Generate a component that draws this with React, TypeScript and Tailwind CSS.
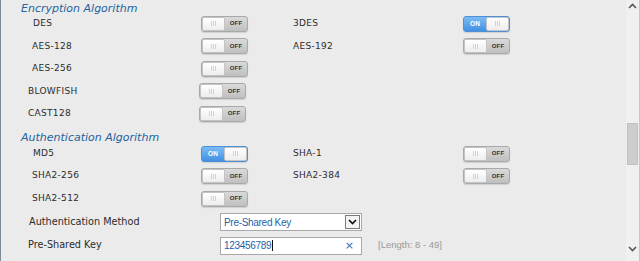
import React from "react";

function Knob() {
  return (
    <div className="w-[23px] h-full rounded-[2px] border border-[#c4c4c4] bg-gradient-to-b from-[#ffffff] to-[#ededed] flex items-center justify-center gap-[1px]">
      <div className="w-[1px] h-[5px] bg-[#d2d2d2]" />
      <div className="w-[1px] h-[5px] bg-[#d2d2d2]" />
      <div className="w-[1px] h-[5px] bg-[#d2d2d2]" />
    </div>
  );
}

function Toggle({ on }: { on?: boolean }) {
  if (on) {
    return (
      <div className="w-[47px] h-[16px] shrink-0 rounded-[3px] border border-[#4d90d8] bg-gradient-to-b from-[#7cbcf4] to-[#4290e2] flex shadow-[0_1px_1px_rgba(0,0,0,0.12)]">
        <div className="flex-1 flex items-center justify-center text-white font-bold text-[6.5px] font-['Liberation_Sans',sans-serif] tracking-[0.2px]">
          ON
        </div>
        <Knob />
      </div>
    );
  }
  return (
    <div className="w-[47px] h-[16px] shrink-0 rounded-[3px] border border-[#a9a9a9] bg-gradient-to-b from-[#dadada] to-[#bfbfbf] flex shadow-[0_1px_1px_rgba(0,0,0,0.12)]">
      <Knob />
      <div className="flex-1 flex items-center justify-center text-[#333] font-bold text-[6px] font-['Liberation_Sans',sans-serif] tracking-[0.2px]">
        OFF
      </div>
    </div>
  );
}

const labelCls =
  "font-['DejaVu_Sans',sans-serif] text-[9px] text-[#2b2b2b] tracking-[0.3px] whitespace-nowrap";

function Row({
  left,
  leftCls,
  leftOn,
  right,
  rightOn,
}: {
  left: string;
  leftCls: string;
  leftOn?: boolean;
  right?: string;
  rightOn?: boolean;
}) {
  return (
    <div className="h-[22.5px] flex items-center">
      <div className={leftCls + " " + labelCls}>{left}</div>
      <Toggle on={leftOn} />
      {right !== undefined && (
        <>
          <div className={"w-[215px] pl-[45px] " + labelCls}>{right}</div>
          <Toggle on={rightOn} />
        </>
      )}
    </div>
  );
}

function Heading({ children, cls }: { children: React.ReactNode; cls: string }) {
  return (
    <div
      className={
        cls +
        " pl-[20px] font-['DejaVu_Sans',sans-serif] italic text-[11px] leading-[18px] text-[#23639e] whitespace-nowrap"
      }
    >
      {children}
    </div>
  );
}

function Scrollbar() {
  return (
    <div className="w-[14px] h-full bg-[#f0f0f0] border-r border-[#c6c6c6] flex flex-col items-center">
      <div className="h-[11px] flex items-center justify-center">
        <svg width="9" height="6" viewBox="0 0 9 6">
          <path d="M1 5 L4.5 1.5 L8 5" fill="none" stroke="#555" strokeWidth="1.6" />
        </svg>
      </div>
      <div className="h-[112px]" />
      <div className="w-[11px] h-[42px] bg-[#cdcdcd] border border-[#c0c0c0]" />
      <div className="flex-1" />
      <div className="h-[14px] flex items-start justify-center pt-[2px]">
        <svg width="9" height="6" viewBox="0 0 9 6">
          <path d="M1 1 L4.5 4.5 L8 1" fill="none" stroke="#555" strokeWidth="1.6" />
        </svg>
      </div>
      <div className="h-[3px]" />
    </div>
  );
}

export default function App() {
  return (
    <div className="w-[640px] h-[261px] flex bg-[#ebebeb] overflow-hidden">
      <div className="w-[1px] h-full bg-[#7d8b98]" />
      <div className="flex-1 flex flex-col">
        <Heading cls="h-[12.5px]">Encryption Algorithm</Heading>
        <Row left="DES" leftCls="w-[200px] pl-[32px]" right="3DES" rightOn />
        <Row left="AES-128" leftCls="w-[200px] pl-[31px]" right="AES-192" />
        <Row left="AES-256" leftCls="w-[200px] pl-[31px]" />
        <Row left="BLOWFISH" leftCls="w-[198px] pl-[27px]" />
        <Row left="CAST128" leftCls="w-[198px] pl-[27px]" />
        <Heading cls="h-[17.25px] pt-[4px]">Authentication Algorithm</Heading>
        <Row left="MD5" leftCls="w-[200px] pl-[32px]" leftOn right="SHA-1" />
        <Row left="SHA2-256" leftCls="w-[200px] pl-[31px]" right="SHA2-384" />
        <Row left="SHA2-512" leftCls="w-[200px] pl-[31px]" />
        <div className="h-[24.5px] flex items-center">
          <div className="w-[219px] pl-[28px] font-['DejaVu_Sans',sans-serif] text-[9.7px] text-[#2b2b2b] whitespace-nowrap">
            Authentication Method
          </div>
          <div className="w-[142px] h-[18px] bg-white border border-[#a8a8a8] flex items-center pl-[3px] pr-[1px]">
            <div className="flex-1 font-['Liberation_Sans',sans-serif] text-[10px] tracking-[-0.3px] text-[#1f5fa8]">
              Pre-Shared Key
            </div>
            <div className="w-[15px] h-[14px] border border-[#7a7a7a] bg-[#f4f4f4] flex items-center justify-center">
              <svg width="9" height="6" viewBox="0 0 9 6">
                <path d="M1 1 L4.5 4.5 L8 1" fill="none" stroke="#111" strokeWidth="1.7" />
              </svg>
            </div>
          </div>
        </div>
        <div className="h-[22.5px] flex items-center">
          <div className="w-[219px] pl-[27px] font-['DejaVu_Sans',sans-serif] text-[9.7px] text-[#2b2b2b] whitespace-nowrap">
            Pre-Shared Key
          </div>
          <div className="w-[142px] h-[18px] bg-white border border-[#a8a8a8] flex items-center pl-[3px] pr-[7px]">
            <div className="flex-1 flex items-center font-['Liberation_Sans',sans-serif] text-[10px] tracking-[-0.3px] text-[#1f5fa8]">
              123456789
              <span className="inline-block w-[1px] h-[11px] bg-[#111] ml-[1px]" />
            </div>
            <div className="text-[#2a6ab4] text-[11px] font-['DejaVu_Sans',sans-serif] leading-none">×</div>
          </div>
          <div className="pl-[16px] font-['Liberation_Sans',sans-serif] text-[9.5px] text-[#9a9a9a] whitespace-nowrap">
            [Length: 8 - 49]
          </div>
        </div>
      </div>
      <Scrollbar />
    </div>
  );
}
